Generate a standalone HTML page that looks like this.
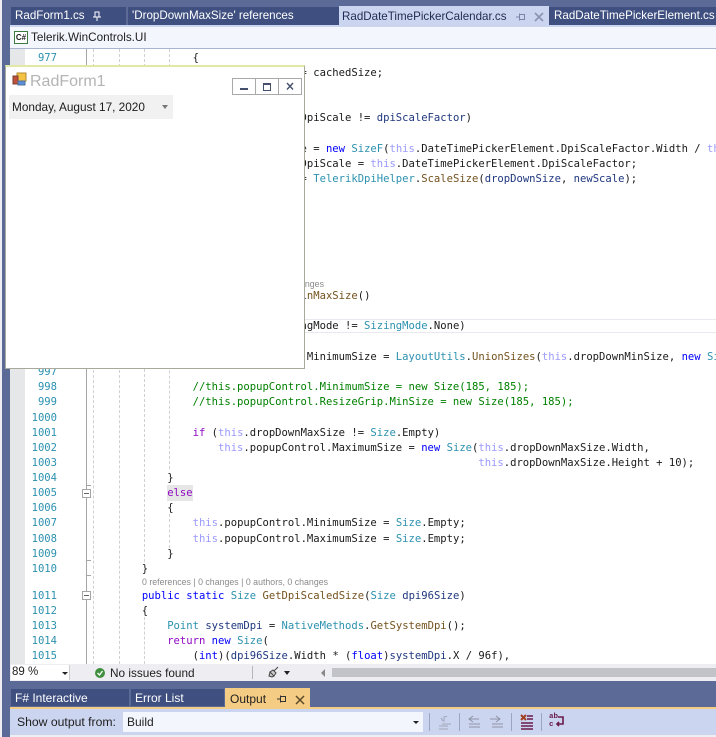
<!DOCTYPE html>
<html><head><meta charset="utf-8">
<style>
html,body{margin:0;padding:0;background:#fff;}
#p{position:relative;width:716px;height:737px;overflow:hidden;background:#fff;font-family:"Liberation Sans",sans-serif;}
.r{position:absolute;}
.l{position:absolute;left:91px;margin-top:2px;white-space:pre;font:10.56px/15px "DejaVu Sans Mono",monospace;color:#1a1a1a;}
.n{position:absolute;left:20px;width:37px;margin-top:2px;text-align:right;font:10.56px/15px "DejaVu Sans Mono",monospace;color:#2b91af;}
.g{position:absolute;width:0;border-left:1px dashed #d0d0d0;}
.k{color:#0000ff}.t{color:#2b91af}.h{color:#9a9aff}.c{color:#008000}.p{color:#8f08c4}.m{color:#74531f}.v{color:#1f377f}
.tab{position:absolute;color:#fff;font-size:11.6px;line-height:18px;white-space:pre;background:#3f5080;}
.lens{position:absolute;font-size:8.800px;line-height:11px;color:#8a8a8a;white-space:pre;}
</style></head><body>
<div id="p">
<!-- left strip -->
<div class="r" style="left:0;top:0;width:2px;height:737px;background:#eeeef2"></div>
<div class="r" style="left:2px;top:0;width:714px;height:737px;background:#5c6a98"></div>
<!-- editor -->
<div class="r" style="left:10px;top:49px;width:706px;height:615px;background:#fff"></div>
<div class="r" style="left:10px;top:49px;width:15px;height:615px;background:#e6e7e8"></div>
<div class="r" style="left:86px;top:49px;width:1px;height:615px;background:#a5a5a5"></div>
<div class="g" style="left:93px;top:49px;height:615px"></div>
<div class="g" style="left:119px;top:49px;height:615px"></div>
<div class="g" style="left:144px;top:49px;height:513px"></div>
<div class="g" style="left:144px;top:617px;height:47px"></div>
<div class="g" style="left:169px;top:49px;height:420px"></div>
<div class="g" style="left:169px;top:514px;height:34px"></div>
<div class="r" style="left:87px;top:319px;width:629px;height:12px;border-top:1px solid #e8e8ee;border-bottom:1px solid #e8e8ee"></div>
<div class="r" style="left:167px;top:485px;width:26px;height:16px;background:#e6e6e6"></div>
<!-- outline marks -->
<div class="r" style="left:82px;top:489px;width:7px;height:7px;border:1px solid #a5a5a5;background:#fff"></div>
<div class="r" style="left:84px;top:493px;width:5px;height:1px;background:#666"></div>
<div class="r" style="left:82px;top:591px;width:7px;height:7px;border:1px solid #a5a5a5;background:#fff"></div>
<div class="r" style="left:84px;top:595px;width:5px;height:1px;background:#666"></div>
<div class="r" style="left:86px;top:560px;width:5px;height:1px;background:#a5a5a5"></div>
<div class="r" style="left:86px;top:575px;width:5px;height:1px;background:#a5a5a5"></div>
<div class="r" style="left:86px;top:485px;width:5px;height:1px;background:#a5a5a5"></div>
<!-- line numbers -->
<span class="n" style="top:49px">977</span>
<span class="n" style="top:363px">997</span>
<span class="n" style="top:378px">998</span>
<span class="n" style="top:393px">999</span>
<span class="n" style="top:409px">1000</span>
<span class="n" style="top:424px">1001</span>
<span class="n" style="top:439px">1002</span>
<span class="n" style="top:454px">1003</span>
<span class="n" style="top:469px">1004</span>
<span class="n" style="top:484px">1005</span>
<span class="n" style="top:499px">1006</span>
<span class="n" style="top:514px">1007</span>
<span class="n" style="top:530px">1008</span>
<span class="n" style="top:545px">1009</span>
<span class="n" style="top:560px">1010</span>
<span class="n" style="top:587px">1011</span>
<span class="n" style="top:602px">1012</span>
<span class="n" style="top:617px">1013</span>
<span class="n" style="top:632px">1014</span>
<span class="n" style="top:647px">1015</span>
<!-- code -->
<span class="l" style="top:49px">                {</span>
<span class="l" style="top:64px">                                 = cachedSize;</span>
<span class="l" style="top:109px">                                 DpiScale != <span class="v">dpiScaleFactor</span>)</span>
<span class="l" style="top:140px">                                 e = <span class="k">new</span> <span class="t">SizeF</span>(<span class="h">this</span>.DateTimePickerElement.DpiScaleFactor.Width / <span class="h">th</span></span>
<span class="l" style="top:155px">                                 DpiScale = <span class="h">this</span>.DateTimePickerElement.DpiScaleFactor;</span>
<span class="l" style="top:170px">                                 = <span class="t">TelerikDpiHelper</span>.<span class="m">ScaleSize</span>(<span class="v">dropDownSize</span>, <span class="v">newScale</span>);</span>
<span class="lens" style="left:300px;top:279px">anges</span>
<span class="l" style="top:287px">                                 i<span class="m">nMaxSize</span>()</span>
<span class="l" style="top:317px">                                 ngMode != <span class="t">SizingMode</span>.None)</span>
<span class="l" style="top:348px">                                  MinimumSize = <span class="t">LayoutUtils</span>.<span class="m">UnionSizes</span>(<span class="h">this</span>.dropDownMinSize, <span class="k">new</span> <span class="t">Si</span></span>
<span class="l c" style="top:378px;color:#008000">                //this.popupControl.MinimumSize = new Size(185, 185);</span>
<span class="l c" style="top:393px;color:#008000">                //this.popupControl.ResizeGrip.MinSize = new Size(185, 185);</span>
<span class="l" style="top:424px">                <span class="p">if</span> (<span class="h">this</span>.dropDownMaxSize != <span class="t">Size</span>.Empty)</span>
<span class="l" style="top:439px">                    <span class="h">this</span>.popupControl.MaximumSize = <span class="k">new</span> <span class="t">Size</span>(<span class="h">this</span>.dropDownMaxSize.Width,</span>
<span class="l" style="top:454px">                                                             <span class="h">this</span>.dropDownMaxSize.Height + 10);</span>
<span class="l" style="top:469px">            }</span>
<span class="l" style="top:484px">            <span class="p">else</span></span>
<span class="l" style="top:499px">            {</span>
<span class="l" style="top:514px">                <span class="h">this</span>.popupControl.MinimumSize = <span class="t">Size</span>.Empty;</span>
<span class="l" style="top:530px">                <span class="h">this</span>.popupControl.MaximumSize = <span class="t">Size</span>.Empty;</span>
<span class="l" style="top:545px">            }</span>
<span class="l" style="top:560px">        }</span>
<span class="lens" style="left:142px;top:577px">0 references | 0 changes | 0 authors, 0 changes</span>
<span class="l" style="top:587px">        <span class="k">public static</span> <span class="t">Size</span> <span class="m">GetDpiScaledSize</span>(<span class="t">Size</span> <span class="v">dpi96Size</span>)</span>
<span class="l" style="top:602px">        {</span>
<span class="l" style="top:617px">            <span class="t">Point</span> <span class="v">systemDpi</span> = <span class="t">NativeMethods</span>.<span class="m">GetSystemDpi</span>();</span>
<span class="l" style="top:632px">            <span class="p">return</span> <span class="k">new</span> <span class="t">Size</span>(</span>
<span class="l" style="top:647px">                (<span class="k">int</span>)(<span class="v">dpi96Size</span>.Width * (<span class="k">float</span>)<span class="v">systemDpi</span>.X / 96f),</span>
<!-- top tabs -->
<div class="tab" style="left:11px;top:7px;width:115px;height:18px;text-indent:4px">RadForm1.cs</div>
<svg class="r" style="left:92px;top:11px" width="10" height="10" viewBox="0 0 10 10"><path d="M3 1v5h4V1zM1 6h8M5 6v4" stroke="#fff" fill="none" stroke-width="1"/></svg>
<div class="tab" style="left:128px;top:7px;width:211px;height:18px;text-indent:4px">'DropDownMaxSize' references</div>
<div class="r" style="left:339px;top:6px;width:210px;height:21px;background:#ccd5f0"></div>
<div class="r" style="left:342px;top:8px;color:#1e2b50;font-size:11.6px;line-height:18px;white-space:pre">RadDateTimePickerCalendar.cs</div>
<svg class="r" style="left:516px;top:12px" width="10" height="10" viewBox="0 0 10 10"><path d="M0 5h3M3.500 2.500h5v5h-5zM3.500 1.500v7" stroke="#7a86a8" fill="none"/></svg>
<svg class="r" style="left:534px;top:12px" width="10" height="10" viewBox="0 0 10 10"><path d="M1 1l8 8M9 1L1 9" stroke="#8a94b0" stroke-width="1.600" fill="none"/></svg>
<div class="tab" style="left:549px;top:7px;width:167px;height:18px;text-indent:5px">RadDateTimePickerElement.cs</div>
<div class="r" style="left:10px;top:25px;width:706px;height:2px;background:#ccd5f0"></div>
<!-- nav bar -->
<div class="r" style="left:10px;top:27px;width:706px;height:21px;background:#f3f6fd"></div>
<div class="r" style="left:10px;top:48px;width:706px;height:1px;background:#a9b4d0"></div>
<div class="r" style="left:14px;top:31px;width:12px;height:11px;border:1px solid #3d7a3d;background:#fff;color:#222;font:bold 8px/11px 'Liberation Sans',sans-serif;text-align:center">C#</div>
<div class="r" style="left:31px;top:29px;font-size:11.7px;line-height:18px;color:#1e1e1e;white-space:pre">Telerik.WinControls.UI</div>
<!-- form -->
<div class="r" style="left:5px;top:65px;width:298px;height:301px;background:#fff;border:1px solid #a8a89c;border-top:2px solid #e2e8a6"></div>
<svg class="r" style="left:12px;top:72px" width="15" height="15" viewBox="0 0 15 15"><rect x="5" y="1" width="9" height="8" fill="#f5c343" stroke="#b08a30"/><rect x="1" y="4" width="5" height="8" fill="#c0503c" stroke="#7a4030"/><rect x="6" y="9" width="7" height="4" fill="#5a8fd8" stroke="#50709c"/></svg>
<div class="r" style="left:30px;top:72px;font-size:16px;line-height:20px;color:#b4b4b4;white-space:pre">RadForm1</div>
<div class="r" style="left:232px;top:78px;width:68px;height:15px;border:1px solid #a8a8a8;background:#fff"></div>
<div class="r" style="left:255px;top:78px;width:1px;height:17px;background:#a8a8a8"></div>
<div class="r" style="left:278px;top:78px;width:1px;height:17px;background:#a8a8a8"></div>
<div class="r" style="left:240px;top:88px;width:8px;height:2px;background:#45506e"></div>
<div class="r" style="left:263px;top:83px;width:6px;height:5px;border:1px solid #45506e;border-top:2px solid #45506e"></div>
<svg class="r" style="left:285px;top:82px" width="10" height="9" viewBox="0 0 10 9"><path d="M2 1l6 6.500M8 1L2 7.500" stroke="#45506e" stroke-width="1.400" fill="none"/></svg>
<div class="r" style="left:9px;top:95px;width:164px;height:24px;background:#f1f1f1"></div>
<div class="r" style="left:12px;top:98px;font-size:11.800px;line-height:18px;color:#1c1c1c;white-space:pre">Monday, August 17, 2020</div>
<div class="r" style="left:162px;top:105px;width:0;height:0;border-left:3px solid transparent;border-right:3px solid transparent;border-top:4px solid #777"></div>
<!-- status bar -->
<div class="r" style="left:10px;top:664px;width:706px;height:17px;background:#eeeef2"></div>
<div class="r" style="left:11px;top:665px;width:58px;height:15px;background:#fff;border-right:1px solid #ccc"></div>
<div class="r" style="left:12px;top:664px;font-size:11.500px;line-height:17px;color:#1e1e1e">89 %</div>
<div class="r" style="left:62px;top:672px;width:0;height:0;border-left:3px solid transparent;border-right:3px solid transparent;border-top:3px solid #222"></div>
<svg class="r" style="left:95px;top:668px" width="10" height="10" viewBox="0 0 10 10"><circle cx="5" cy="5" r="5" fill="#3f8f3f"/><path d="M2.500 5l2 2 3-4" stroke="#fff" stroke-width="1.300" fill="none"/></svg>
<div class="r" style="left:110px;top:665px;font-size:11.800px;line-height:17px;color:#1e1e1e;white-space:pre">No issues found</div>
<div class="r" style="left:252px;top:666px;width:1px;height:13px;background:#b5b5bc"></div>
<svg class="r" style="left:267px;top:666px" width="13" height="13" viewBox="0 0 13 13"><path d="M11 1L7 5M3 6l4 4 2-3-3-3zM3 6L2 10l3 1 2-1" stroke="#444" fill="#ccc"/></svg>
<div class="r" style="left:284px;top:671px;width:0;height:0;border-left:3.500px solid transparent;border-right:3.500px solid transparent;border-top:4px solid #222"></div>
<div class="r" style="left:321px;top:669px;width:0;height:0;border-top:4px solid transparent;border-bottom:4px solid transparent;border-right:4px solid #888"></div>
<div class="r" style="left:332px;top:668px;width:384px;height:9px;background:#c2c3c9"></div>
<!-- bottom panel tabs -->
<div class="tab" style="left:11px;top:689px;width:118px;height:17px;text-indent:4px;font-size:12px">F# Interactive</div>
<div class="tab" style="left:131px;top:689px;width:93px;height:17px;text-indent:4px;font-size:12px">Error List</div>
<div class="r" style="left:225px;top:688px;width:85px;height:20px;background:#f5cc84"></div>
<div class="r" style="left:230px;top:690px;font-size:12px;line-height:18px;color:#1e1e1e">Output</div>
<svg class="r" style="left:277px;top:694px" width="10" height="10" viewBox="0 0 10 10"><path d="M0 5h3M3.500 2.500h5v5h-5zM3.500 1.500v7" stroke="#333" fill="none"/></svg>
<svg class="r" style="left:295px;top:695px" width="10" height="10" viewBox="0 0 10 10"><path d="M1 1l8 8M9 1L1 9" stroke="#5a4a2a" stroke-width="1.500" fill="none"/></svg>
<div class="r" style="left:10px;top:707px;width:706px;height:2px;background:#f5cc84"></div>
<!-- output toolbar -->
<div class="r" style="left:10px;top:709px;width:706px;height:26px;background:#ccd5f0"></div>
<div class="r" style="left:10px;top:735px;width:706px;height:2px;background:#eeeef2"></div>
<div class="r" style="left:17px;top:713px;font-size:12.2px;line-height:18px;color:#1e1e1e;white-space:pre">Show output from:</div>
<div class="r" style="left:123px;top:712px;width:300px;height:20px;background:#f3f6fd"></div>
<div class="r" style="left:127px;top:713px;font-size:12px;line-height:18px;color:#1e1e1e">Build</div>
<div class="r" style="left:413px;top:721px;width:0;height:0;border-left:3px solid transparent;border-right:3px solid transparent;border-top:3px solid #222"></div>
<div class="r" style="left:429px;top:713px;width:1px;height:18px;background:#9aa6c4"></div>
<div class="r" style="left:459px;top:713px;width:1px;height:18px;background:#9aa6c4"></div>
<div class="r" style="left:511px;top:713px;width:1px;height:18px;background:#9aa6c4"></div>
<div class="r" style="left:541px;top:713px;width:1px;height:18px;background:#9aa6c4"></div>
<svg class="r" style="left:438px;top:714px" width="14" height="16" viewBox="0 0 14 16"><path d="M6 8V3a2 2 0 0 1 3 0M3 4l2 3M4 10h9M1 12h9M1 15h9" stroke="#a0a6b8" fill="none"/></svg>
<svg class="r" style="left:468px;top:715px" width="36" height="14" viewBox="0 0 36 14"><path d="M5 1L1 4l4 3M1 4h10M1 9h11M1 12h11M28 1l4 3-4 3M32 4H22M24 9h11M24 12h11" stroke="#8e94a8" fill="none"/></svg>
<svg class="r" style="left:520px;top:714px" width="14" height="16" viewBox="0 0 14 16"><path d="M1 1l5 5M6 1L1 6" stroke="#a04020" stroke-width="2" fill="none"/><path d="M7 2h6M7 5h6M1 9h12M1 12h12M1 15h12" stroke="#6a1b4a" stroke-width="1.500" fill="none"/></svg>
<svg class="r" style="left:549px;top:714px" width="16" height="16" viewBox="0 0 16 16"><path d="M9 3h5v7H8M10 8l-2 2 2 2" stroke="#6a1b4a" stroke-width="1.600" fill="none"/></svg>
<div class="r" style="left:549px;top:714px;font:bold 7.500px/7.500px 'Liberation Mono',monospace;color:#6a1b4a;white-space:pre">ab
c</div>
</div>
</body></html>
